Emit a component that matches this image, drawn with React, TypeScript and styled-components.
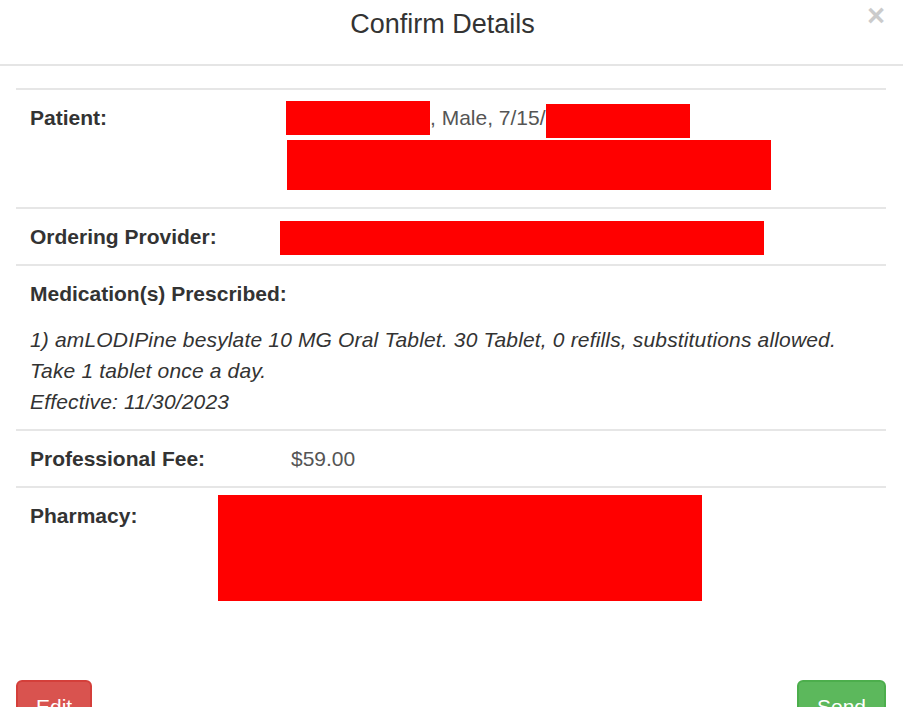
import React from 'react'
import styled, { createGlobalStyle } from 'styled-components'

const GlobalStyle = createGlobalStyle`
  html, body {
    margin: 0;
    padding: 0;
    background: #fff;
  }
  body {
    font-family: "Liberation Sans", Arial, Helvetica, sans-serif;
    color: #333;
  }
`

const Modal = styled.div`
  width: 903px;
  height: 707px;
  overflow: hidden;
  background: #fff;
`

const Header = styled.div`
  display: flex;
  align-items: flex-start;
  height: 64px;
  padding-left: 18px;
  border-bottom: 2px solid #e5e5e5;
`

const Title = styled.h4`
  flex: 1;
  margin: 0;
  padding-top: 9px;
  text-align: center;
  font-size: 27px;
  line-height: 31px;
  font-weight: 400;
  color: #333;
`

const Close = styled.button`
  flex: none;
  margin: 0 18px 0 0;
  padding: 0;
  border: none;
  background: none;
  font-family: "Liberation Sans", Arial, sans-serif;
  font-size: 31px;
  font-weight: 700;
  line-height: 32px;
  color: #000;
  opacity: 0.2;
  cursor: pointer;
`

const Body = styled.div`
  padding: 22px 17px 0 16px;
`

const Table = styled.div`
  display: flex;
  flex-direction: column;
`

const Row = styled.div<{ $stack?: boolean }>`
  display: flex;
  flex-direction: ${p => (p.$stack ? 'column' : 'row')};
  align-items: flex-start;
  padding: 12px 14px;
  border-top: 2px solid #e6e6e6;
`

const Label = styled.div<{ $width?: number }>`
  flex: none;
  width: ${p => (p.$width ? `${p.$width}px` : 'auto')};
  font-size: 21px;
  line-height: 31px;
  font-weight: 700;
  color: #333;
`

const Value = styled.div`
  display: flex;
  flex-direction: column;
  align-items: flex-start;
  font-size: 21px;
  line-height: 31px;
  color: #555;
`

const ValueLine = styled.div`
  display: flex;
  align-items: flex-start;
  white-space: nowrap;
`

const Redacted = styled.span<{ $w: number; $h: number; $top?: number; $bottom?: number; $left?: number }>`
  display: block;
  flex: none;
  width: ${p => p.$w}px;
  height: ${p => p.$h}px;
  margin: ${p => `${p.$top ?? 0}px 0 ${p.$bottom ?? 0}px ${p.$left ?? 0}px`};
  background: #ff0000;
`

const Instructions = styled.div`
  margin-top: 15px;
  font-size: 21px;
  line-height: 31px;
  font-style: italic;
  letter-spacing: 0.16px;
  color: #333;
`

const Footer = styled.div`
  display: flex;
  justify-content: space-between;
  padding: 67px 17px 0 16px;
`

const Button = styled.button<{ $variant: 'danger' | 'success' }>`
  padding: 9px 18px;
  font-family: "Liberation Sans", Arial, sans-serif;
  font-size: 21px;
  line-height: 31px;
  color: #fff;
  border-radius: 6px;
  border: 2px solid ${p => (p.$variant === 'danger' ? '#d43f3a' : '#4cae4c')};
  background: ${p => (p.$variant === 'danger' ? '#d9534f' : '#5cb85c')};
  cursor: pointer;
`

export default function App() {
  return (
    <>
      <GlobalStyle />
      <Modal>
        <Header>
          <Title>Confirm Details</Title>
          <Close aria-label="Close">×</Close>
        </Header>
        <Body>
          <Table>
            <Row>
              <Label $width={256}>Patient:</Label>
              <Value>
                <ValueLine>
                  <Redacted $w={144} $h={34} $top={-1} />
                  <span>, Male, 7/15/</span>
                  <Redacted $w={144} $h={34} $top={2} />
                </ValueLine>
                <Redacted $w={484} $h={50} $top={2} $bottom={5} $left={1} />
              </Value>
            </Row>
            <Row>
              <Label $width={250}>Ordering Provider:</Label>
              <Value>
                <Redacted $w={484} $h={34} $bottom={-3} />
              </Value>
            </Row>
            <Row $stack>
              <Label>Medication(s) Prescribed:</Label>
              <Instructions>
                1) amLODIPine besylate 10 MG Oral Tablet. 30 Tablet, 0 refills, substitutions allowed.
                <br />
                Take 1 tablet once a day.
                <br />
                Effective: 11/30/2023
              </Instructions>
            </Row>
            <Row>
              <Label $width={261}>Professional Fee:</Label>
              <Value>$59.00</Value>
            </Row>
            <Row>
              <Label $width={188}>Pharmacy:</Label>
              <Value>
                <Redacted $w={484} $h={106} $top={-5} />
              </Value>
            </Row>
          </Table>
        </Body>
        <Footer>
          <Button $variant="danger">Edit</Button>
          <Button $variant="success">Send</Button>
        </Footer>
      </Modal>
    </>
  )
}
